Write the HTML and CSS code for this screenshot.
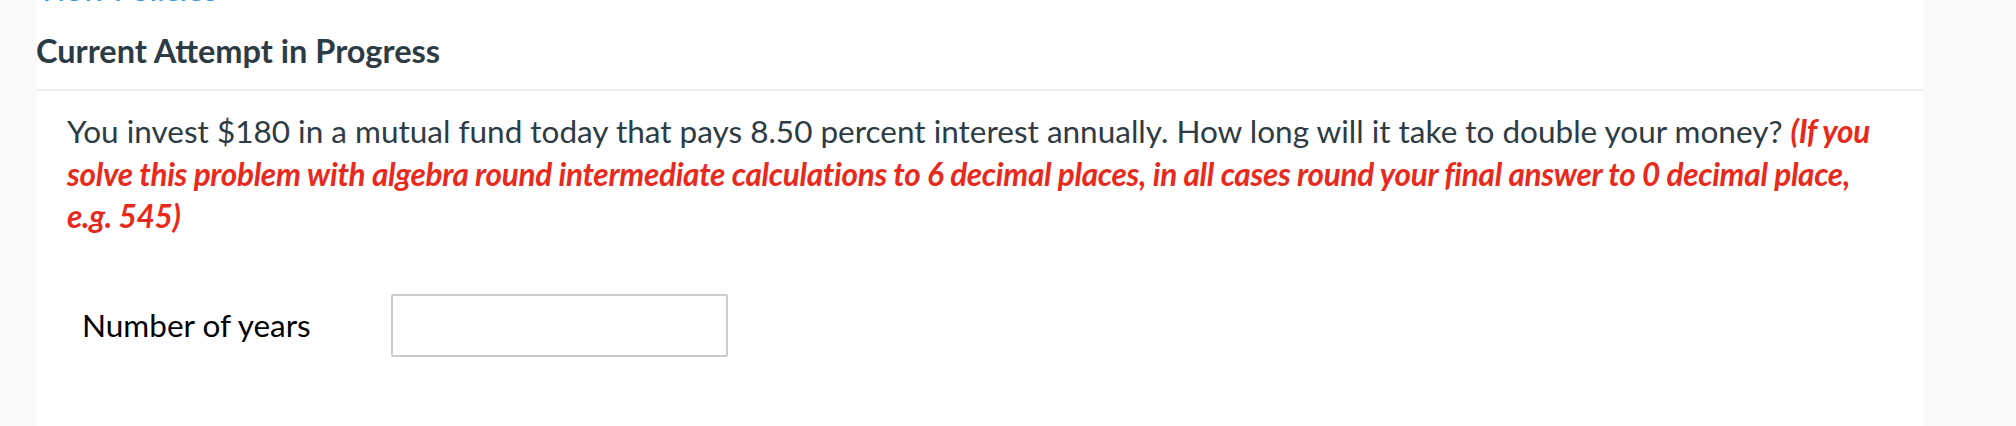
FILE: index.html
```html
<!DOCTYPE html>
<html>
<head>
<meta charset="utf-8">
<link rel="stylesheet" href="styles.css">
</head>
<body>
<div class="page">
  <main class="panel">
    <a class="policies" href="#">View Policies</a>
    <h2 class="attempt">Current Attempt in Progress</h2>
    <div class="question">
      <p class="stem">You invest $180 in a mutual fund today that pays 8.50 percent interest annually. How long will it take to double your money? <em class="note">(If you solve this problem with algebra round intermediate calculations to 6 decimal places, in all cases round your final answer to 0 decimal place, e.g. 545)</em></p>
      <div class="answer">
        <label class="answer-label" for="years">Number of years</label>
        <input class="answer-input" id="years" type="text">
      </div>
    </div>
  </main>
</div>
</body>
</html>
```
FILE: styles.css
```css
html, body {
  margin: 0;
  padding: 0;
  background: #f9f9f9;
  font-family: Lato, "Open Sans", sans-serif;
  color: #2d3b45;
}
.page {
  padding: 0 92px 0 36px;
  height: 426px;
  overflow: hidden;
}
.panel {
  background: #ffffff;
  height: 100%;
  display: flex;
  flex-direction: column;
}
.policies {
  display: block;
  margin-top: -27px;
  height: 32px;
  font-size: 31.5px;
  line-height: 32px;
  color: #2d9be0;
  text-decoration: none;
}
.attempt {
  margin: 26px 0 0 0;
  font-size: 32.5px;
  line-height: 40px;
  font-weight: 700;
  color: #2d3b45;
  padding-bottom: 18px;
  border-bottom: 2px solid #eeeeee;
}
.question {
  padding: 0 34px 0 31px;
}
.stem {
  margin: 19px 0 0 0;
  font-size: 31.5px;
  line-height: 42.5px;
  color: #2d3b45;
}
.note {
  color: #e8291c;
  font-weight: 700;
  font-style: italic;
  letter-spacing: -0.3px;
}
.answer {
  display: flex;
  align-items: center;
  margin-top: 56px;
  padding-left: 15px;
}
.answer-label {
  font-size: 31.5px;
  color: #000000;
  width: 309px;
}
.answer-input {
  box-sizing: border-box;
  width: 337px;
  height: 63px;
  border: 2px solid #cccccc;
  border-radius: 2px;
  background: #fff;
  margin: 0;
}
```
